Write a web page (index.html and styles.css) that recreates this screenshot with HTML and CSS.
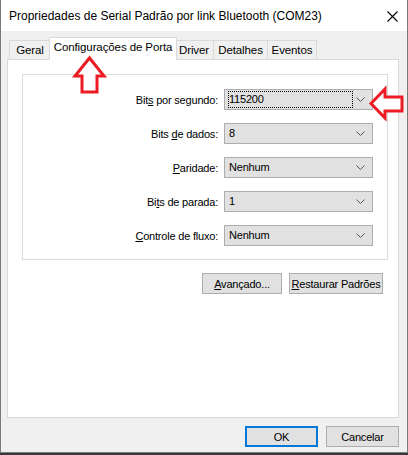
FILE: index.html
```html
<!DOCTYPE html>
<html lang="pt">
<head>
<meta charset="utf-8">
<link rel="stylesheet" href="styles.css">
</head>
<body>
<div class="window">
  <div class="titlebar">
    <span class="title">Propriedades de Serial Padrão por link Bluetooth (COM23)</span>
    <svg class="close" width="11" height="11" viewBox="0 0 11 11"><path d="M0.5 0.5 L10.5 10.5 M10.5 0.5 L0.5 10.5" stroke="#000" stroke-width="1.1" fill="none"/></svg>
  </div>
  <div class="body">
    <div class="tabs">
      <div class="tab t-geral">Geral</div>
      <div class="tab active t-config">Configurações de Porta</div>
      <div class="tab t-driver">Driver</div>
      <div class="tab t-det">Detalhes</div>
      <div class="tab t-ev">Eventos</div>
    </div>
    <div class="panel">
      <div class="group">
        <label class="lbl">Bit<u>s</u> por segundo:</label>
        <div class="combo focused"><span class="val">115200</span><svg class="chev" width="9" height="5" viewBox="0 0 9 5"><path d="M0.5 0.5 L4.5 4.5 L8.5 0.5" stroke="#555" fill="none"/></svg></div>
        <label class="lbl">Bits <u>d</u>e dados:</label>
        <div class="combo"><span class="val">8</span><svg class="chev" width="9" height="5" viewBox="0 0 9 5"><path d="M0.5 0.5 L4.5 4.5 L8.5 0.5" stroke="#555" fill="none"/></svg></div>
        <label class="lbl"><u>P</u>aridade:</label>
        <div class="combo"><span class="val">Nenhum</span><svg class="chev" width="9" height="5" viewBox="0 0 9 5"><path d="M0.5 0.5 L4.5 4.5 L8.5 0.5" stroke="#555" fill="none"/></svg></div>
        <label class="lbl">Bi<u>t</u>s de parada:</label>
        <div class="combo"><span class="val">1</span><svg class="chev" width="9" height="5" viewBox="0 0 9 5"><path d="M0.5 0.5 L4.5 4.5 L8.5 0.5" stroke="#555" fill="none"/></svg></div>
        <label class="lbl"><u>C</u>ontrole de fluxo:</label>
        <div class="combo"><span class="val">Nenhum</span><svg class="chev" width="9" height="5" viewBox="0 0 9 5"><path d="M0.5 0.5 L4.5 4.5 L8.5 0.5" stroke="#555" fill="none"/></svg></div>
      </div>
      <div class="panel-buttons">
        <button class="btn b-adv"><u>A</u>vançado...</button>
        <button class="btn b-rest"><u>R</u>estaurar Padrões</button>
      </div>
    </div>
    <div class="footer">
      <button class="btn b-ok">OK</button>
      <button class="btn b-cancel">Cancelar</button>
    </div>
  </div>
  <svg class="annot" width="408" height="455" viewBox="0 0 408 455">
    <path d="M89.5 58 L104 76 L97 76 L97 92 L82 92 L82 76 L75 76 Z" fill="#fff" stroke="#ed1c24" stroke-width="3" stroke-linejoin="miter"/>
    <path d="M371 103.5 L385 89 L385 97 L402 97 L402 111 L385 111 L385 118 Z" fill="#fff" stroke="#ed1c24" stroke-width="3" stroke-linejoin="miter"/>
  </svg>
</div>
</body>
</html>
```

FILE: styles.css
```css
* { box-sizing: border-box; }
html, body { margin: 0; padding: 0; }
body {
  width: 408px;
  height: 455px;
  background: #3a3a3a;
  font-family: "Liberation Sans", Arial, sans-serif;
  font-size: 11px;
  letter-spacing: -0.2px;
  color: #000;
  overflow: hidden;
}
.window {
  position: relative;
  width: 408px;
  height: 453px;
  background: #f0f0f0;
  border-left: 1px solid #7a7a7a;
  border-right: 1px solid #7a7a7a;
  border-bottom: 1px solid #7a7a7a;
  display: flex;
  flex-direction: column;
}
.titlebar {
  height: 31px;
  background: #fff;
  display: flex;
  align-items: center;
  padding-left: 8px;
  padding-right: 9px;
  flex: none;
}
.title {
  flex: 1;
  font-family: "Liberation Sans", Arial, sans-serif;
  font-size: 12px;
  letter-spacing: 0;
  padding-top: 1px;
}
.close { display: block; margin-top: 1px; }
.body {
  flex: 1;
  display: flex;
  flex-direction: column;
  padding: 6px 8px 0 6px;
}
.tabs {
  display: flex;
  align-items: flex-end;
  height: 22px;
  padding-left: 2px;
  position: relative;
  z-index: 1;
}
.tab {
  height: 19px;
  border: 1px solid #d9d9d9;
  border-bottom: none;
  background: #f0f0f0;
  padding: 2px 0 0;
  text-align: center;
  margin-left: -1px;
  line-height: 14px;
  font-size: 11.5px;
  letter-spacing: -0.1px;
  white-space: nowrap;
}
.tab.active {
  height: 23px;
  background: #fff;
  margin-bottom: -1px;
  margin-left: -2px;
  margin-right: -2px;
  padding-top: 2px;
  z-index: 2;
}
.t-geral { width: 42px; margin-left: 0; }
.t-config { width: 128px; }
.t-driver { width: 40px; }
.t-det { width: 55px; }
.t-ev { width: 50px; }
.panel {
  height: 359px;
  background: #fff;
  border: 1px solid #d9d9d9;
  padding: 14px 11px 0 14px;
  display: flex;
  flex-direction: column;
}
.group {
  width: 366px;
  height: 186px;
  border: 1px solid #dcdcdc;
  display: grid;
  grid-template-columns: 1fr 149px;
  column-gap: 6px;
  row-gap: 13px;
  grid-auto-rows: 21px;
  padding: 14px 14px 0 14px;
  align-items: center;
}
.lbl { text-align: right; white-space: nowrap; }
.combo {
  height: 21px;
  background: #e1e1e1;
  border: 1px solid #adadad;
  display: flex;
  align-items: center;
  padding: 0 7px 0 3px;
}
.combo .val { flex: 1; padding-left: 1px; line-height: 15px; }
.combo.focused .val {
  border: 1px dotted #000;
  margin-right: 3px;
  padding-left: 0;
  line-height: 15px;
}
.chev { display: block; }
.panel-buttons {
  display: flex;
  justify-content: flex-end;
  gap: 7px;
  margin-top: 13px;
  padding-right: 4px;
}
.btn {
  height: 21px;
  background: #e1e1e1;
  border: 1px solid #adadad;
  font-family: "Liberation Sans", Arial, sans-serif;
  font-size: 11px;
  letter-spacing: -0.2px;
  color: #000;
  padding: 0;
  margin: 0;
  border-radius: 0;
  white-space: nowrap;
}
.b-adv { width: 80px; }
.b-rest { width: 94px; }
.footer {
  display: flex;
  justify-content: flex-end;
  gap: 8px;
  padding-top: 8px;
}
.b-ok { width: 73px; border: 2px solid #0078d7; }
.b-cancel { width: 73px; }
.annot {
  position: absolute;
  left: -1px;
  top: 0;
  pointer-events: none;
  z-index: 10;
}
```
